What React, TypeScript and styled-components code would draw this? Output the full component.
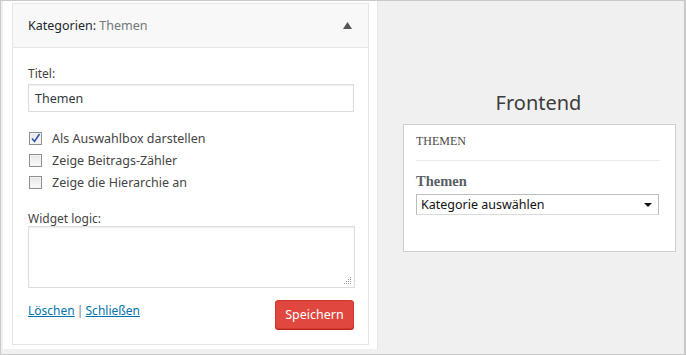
import React from 'react';
import styled, { createGlobalStyle } from 'styled-components';

const GlobalStyle = createGlobalStyle`
  html, body {
    margin: 0;
    padding: 0;
    background: #fff;
  }
`;

const sans = `'Noto Sans', 'Open Sans', 'Liberation Sans', sans-serif`;
const serif = `'Liberation Serif', 'DejaVu Serif', serif`;

const StyledFrame = styled.div`
  box-sizing: border-box;
  display: flex;
  width: 686px;
  height: 355px;
  background: #f0f0f0;
  border: 1px solid #c9c9c9;
  border-right-width: 2px;
  font-family: ${sans};
  font-size: 12px;
  color: #32373c;
`;

const StyledSidebar = styled.div`
  box-sizing: border-box;
  width: 375px;
  margin: 0 0 5px 2px;
  padding: 2px 8px 4px 9px;
  background: #fff;
  border-right: 1px solid #e6e6e6;
`;

const StyledWidget = styled.div`
  box-sizing: border-box;
  height: 100%;
  border: 1px solid #e5e5e5;
  display: flex;
  flex-direction: column;
`;

const StyledWidgetHeader = styled.div`
  display: flex;
  align-items: center;
  justify-content: space-between;
  height: 43px;
  padding: 0 16px 0 15px;
  background: #f8f8f8;
  border-bottom: 1px solid #e5e5e5;
  font-size: 12.5px;
  color: #23282d;

  & span {
    color: #72777c;
  }
`;

const StyledWidgetBody = styled.div`
  flex: 1;
  padding: 17px 15px 0;
  display: flex;
  flex-direction: column;
`;

const StyledLabel = styled.div<{ $gap?: number }>`
  line-height: 18px;
  color: #444;
  margin: ${(p) => p.$gap ?? 0}px 0 1px;
`;

const StyledInput = styled.div`
  box-sizing: border-box;
  height: 28px;
  width: 326px;
  border: 1px solid #ddd;
  box-shadow: inset 0 1px 2px rgba(0, 0, 0, 0.07);
  padding: 0 6px;
  display: flex;
  align-items: center;
  font-size: 12.5px;
  color: #32373c;
`;

const StyledOptions = styled.div`
  margin: 15px 0 0 1px;
  display: flex;
  flex-direction: column;
`;

const StyledOption = styled.label`
  display: flex;
  align-items: center;
  gap: 10px;
  height: 22px;
  color: #444;
  font-size: 12.5px;
`;

const StyledBox = styled.span`
  box-sizing: border-box;
  width: 13px;
  height: 13px;
  border: 1px solid #8f8f8f;
  background: linear-gradient(#e6e6e6, #fafafa);
  box-shadow: inset 0 0 0 1px #f4f4f4;
  display: flex;
  align-items: center;
  justify-content: center;
`;

const StyledTextarea = styled.div`
  box-sizing: border-box;
  position: relative;
  width: 327px;
  height: 62px;
  margin-top: -3px;
  border: 1px solid #ddd;
  box-shadow: inset 0 1px 2px rgba(0, 0, 0, 0.07);
`;

const StyledGrip = styled.svg`
  position: absolute;
  right: 2px;
  bottom: 2px;
`;

const StyledFooter = styled.div`
  display: flex;
  align-items: flex-start;
  justify-content: space-between;
  width: 326px;
  margin-top: 15px;
`;

const StyledLinks = styled.div`
  color: #72777c;
  font-size: 12px;
  line-height: 16px;
  word-spacing: -1px;

  & a {
    color: #0073aa;
    text-decoration: underline;
    word-spacing: 0;
  }
`;

const StyledButton = styled.button`
  box-sizing: border-box;
  width: 79px;
  height: 29px;
  margin-top: -3px;
  background: #e0483f;
  border: 1px solid #d0372c;
  border-radius: 3px;
  box-shadow: 0 1px 0 #b82a20;
  color: #fff;
  font-family: ${sans};
  font-size: 12.5px;
  padding: 0;
`;

const StyledPreview = styled.div`
  flex: 1;
  display: flex;
  flex-direction: column;
  align-items: center;
  padding: 89px 0 0 17px;
`;

const StyledHeading = styled.div`
  font-size: 20px;
  line-height: 26px;
  color: #3c3c3c;
  margin: 0 2px 8px 0;
`;

const StyledCard = styled.div`
  box-sizing: border-box;
  width: 273px;
  height: 128px;
  background: #fff;
  border: 1px solid #cfcfcf;
  padding: 8px 15px 0 12px;
`;

const StyledCardTitle = styled.div`
  font-family: ${serif};
  font-size: 12px;
  color: #4a4a4a;
  line-height: 16px;
  padding-bottom: 11px;
  border-bottom: 1px solid #eaeaea;
`;

const StyledCardSub = styled.div`
  font-family: ${serif};
  font-weight: bold;
  font-size: 14.5px;
  color: #5a5f66;
  margin-top: 12px;
  line-height: 16px;
`;

const StyledSelect = styled.div`
  box-sizing: border-box;
  width: 243px;
  height: 21px;
  margin-top: 5px;
  border: 1px solid #bdbdbd;
  border-bottom-color: #dadada;
  display: flex;
  align-items: center;
  justify-content: space-between;
  padding: 0 6px 0 4px;
  font-size: 12.5px;
  color: #111;
`;

const StyledCaret = styled.span`
  width: 0;
  height: 0;
  border-left: 4px solid transparent;
  border-right: 4px solid transparent;
  border-top: 4px solid #111;
`;

const Check = () => (
  <svg width="11" height="11" viewBox="0 0 11 11">
    <path d="M2 5.5 L4.5 8.5 L9.5 1" fill="none" stroke="#2f5aa8" strokeWidth="1.6" />
  </svg>
);

const CollapseArrow = () => (
  <svg width="9" height="7" viewBox="0 0 9 7">
    <path d="M0 7 L4.5 0 L9 7 Z" fill="#555" />
  </svg>
);

const options = [
  { label: 'Als Auswahlbox darstellen', checked: true },
  { label: 'Zeige Beitrags-Zähler', checked: false },
  { label: 'Zeige die Hierarchie an', checked: false },
];

export default function App() {
  return (
    <>
      <GlobalStyle />
      <StyledFrame>
        <StyledSidebar>
          <StyledWidget>
            <StyledWidgetHeader>
              <div>
                Kategorien: <span>Themen</span>
              </div>
              <CollapseArrow />
            </StyledWidgetHeader>
            <StyledWidgetBody>
              <StyledLabel>Titel:</StyledLabel>
              <StyledInput>Themen</StyledInput>

              <StyledOptions>
                {options.map((o) => (
                  <StyledOption key={o.label}>
                    <StyledBox>{o.checked && <Check />}</StyledBox>
                    {o.label}
                  </StyledOption>
                ))}
              </StyledOptions>

              <StyledLabel $gap={17}>Widget logic:</StyledLabel>
              <StyledTextarea>
                <StyledGrip width="8" height="8" viewBox="0 0 8 8">
                  <g fill="#9a9a9a">
                    <rect x="6" y="0" width="1" height="1" />
                    <rect x="4" y="2" width="1" height="1" />
                    <rect x="6" y="2" width="1" height="1" />
                    <rect x="2" y="4" width="1" height="1" />
                    <rect x="4" y="4" width="1" height="1" />
                    <rect x="6" y="4" width="1" height="1" />
                    <rect x="0" y="6" width="1" height="1" />
                    <rect x="2" y="6" width="1" height="1" />
                    <rect x="4" y="6" width="1" height="1" />
                    <rect x="6" y="6" width="1" height="1" />
                  </g>
                </StyledGrip>
              </StyledTextarea>

              <StyledFooter>
                <StyledLinks>
                  <a>Löschen</a> | <a>Schließen</a>
                </StyledLinks>
                <StyledButton>Speichern</StyledButton>
              </StyledFooter>
            </StyledWidgetBody>
          </StyledWidget>
        </StyledSidebar>

        <StyledPreview>
          <StyledHeading>Frontend</StyledHeading>
          <StyledCard>
            <StyledCardTitle>THEMEN</StyledCardTitle>
            <StyledCardSub>Themen</StyledCardSub>
            <StyledSelect>
              Kategorie auswählen
              <StyledCaret />
            </StyledSelect>
          </StyledCard>
        </StyledPreview>
      </StyledFrame>
    </>
  );
}
